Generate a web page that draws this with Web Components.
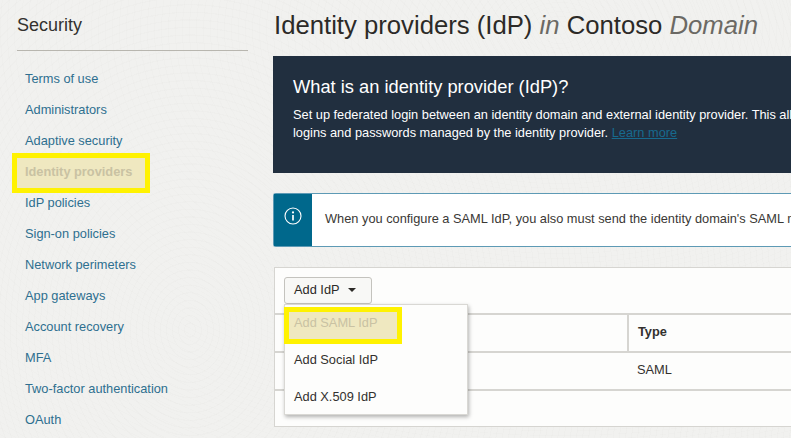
<!DOCTYPE html>
<html lang="en">
<head>
<meta charset="utf-8">
<title>Identity providers</title>
<style>
    html, body { margin: 0; height: 100%; overflow: hidden; }
    body {
        font-family: "Liberation Sans", Arial, sans-serif;
        background-color: #f1f1ef;
        background-image:
            repeating-radial-gradient(ellipse 190px 240px at 190px 330px, rgba(120,115,105,0) 0 5px, rgba(120,115,105,.018) 5px 6px),
            repeating-radial-gradient(ellipse 300px 200px at 560px 30px, rgba(120,115,105,0) 0 6px, rgba(120,115,105,.015) 6px 7px);
    }
</style>
</head>
<body>
<idp-page>
    <sec-sidebar slot="side" heading="Security">
        <nav-item>Terms of use</nav-item>
        <nav-item>Administrators</nav-item>
        <nav-item>Adaptive security</nav-item>
        <nav-item marked>Identity providers</nav-item>
        <nav-item>IdP policies</nav-item>
        <nav-item>Sign-on policies</nav-item>
        <nav-item>Network perimeters</nav-item>
        <nav-item>App gateways</nav-item>
        <nav-item>Account recovery</nav-item>
        <nav-item>MFA</nav-item>
        <nav-item>Two-factor authentication</nav-item>
        <nav-item>OAuth</nav-item>
    </sec-sidebar>
    <page-title>Identity providers (IdP) <em>in</em> Contoso <em>Domain</em></page-title>
    <hero-panel heading="What is an identity provider (IdP)?">
        Set up federated login between an identity domain and external identity provider. This allows<br>
        logins and passwords managed by the identity provider. <a href="#">Learn more</a>
    </hero-panel>
    <info-banner>When you configure a SAML IdP, you also must send the identity domain's SAML metadata</info-banner>
    <idp-card></idp-card>
</idp-page>

<script>
class IdpPage extends HTMLElement {
    constructor() {
        super();
        this.attachShadow({ mode: 'open' });
    }

    connectedCallback() {
        this.shadowRoot.innerHTML = `
            <style>
                :host { display: grid; grid-template-columns: 231px 560px; column-gap: 25px; padding-left: 17px; width: 900px; height: 438px; overflow: hidden; }
                .main { display: flex; flex-direction: column; width: 560px; }
            </style>
            <slot name="side"></slot>
            <div class="main"><slot></slot></div>
        `;
    }
}

class SecSidebar extends HTMLElement {
    constructor() {
        super();
        this.attachShadow({ mode: 'open' });
    }

    connectedCallback() {
        this.shadowRoot.innerHTML = `
            <style>
                :host { display: block; }
                h2 { margin: 0; padding-top: 15px; height: 35px; border-bottom: 1px solid #b8b6af; font-size: 18px; line-height: 21px; font-weight: 400; color: #33312e; }
                nav { display: flex; flex-direction: column; padding-top: 12px; }
            </style>
            <h2>${this.getAttribute('heading')}</h2>
            <nav><slot></slot></nav>
        `;
    }
}

class NavItem extends HTMLElement {
    constructor() {
        super();
        this.attachShadow({ mode: 'open' });
    }

    connectedCallback() {
        this.shadowRoot.innerHTML = `
            <style>
                :host { display: block; height: 31px; font-size: 12.8px; line-height: 31px; color: #2e6f8f; }
                span { display: block; padding-left: 8px; }
                :host([marked]) { color: #c9c2a3; font-weight: 700; }
                :host([marked]) span { width: 120px; height: 30px; line-height: 28px; margin-top: 2px; background: #efe8c0; outline: 5px solid #fff200; }
            </style>
            <span><slot></slot></span>
        `;
    }
}

class PageTitle extends HTMLElement {
    constructor() {
        super();
        this.attachShadow({ mode: 'open' });
    }

    connectedCallback() {
        this.shadowRoot.innerHTML = `
            <style>
                :host { display: block; height: 56px; box-sizing: border-box; padding: 11px 0 0 1px; font-size: 25.7px; line-height: 28px; color: #2c2a27; white-space: nowrap; }
                ::slotted(em) { color: #6b6964; font-style: italic; }
            </style>
            <slot></slot>
        `;
    }
}

class HeroPanel extends HTMLElement {
    constructor() {
        super();
        this.attachShadow({ mode: 'open' });
    }

    connectedCallback() {
        this.shadowRoot.innerHTML = `
            <style>
                :host { display: block; height: 117px; box-sizing: border-box; padding: 20px 0 0 20px; background: #212f3f; color: #fff; font-size: 12.8px; line-height: 18px; white-space: nowrap; }
                h3 { margin: 0 0 8px; font-size: 18.3px; line-height: 22px; font-weight: 400; }
                ::slotted(a) { color: #176a8e; }
            </style>
            <h3>${this.getAttribute('heading')}</h3>
            <slot></slot>
        `;
    }
}

class InfoBanner extends HTMLElement {
    constructor() {
        super();
        this.attachShadow({ mode: 'open' });
    }

    connectedCallback() {
        this.shadowRoot.innerHTML = `
            <style>
                :host { display: flex; height: 54px; margin-top: 20px; box-sizing: border-box; background: #fff; border: 1px solid #5d9ab5; border-right: 0; border-radius: 3px 0 0 3px; font-size: 12.8px; color: #3a3835; white-space: nowrap; }
                .tag { flex: none; width: 38px; background: #00688c; display: flex; justify-content: center; padding-top: 13px; box-sizing: border-box; }
                p { margin: 0; padding: 16px 0 0 13px; line-height: 18px; }
                svg { display: block; }
            </style>
            <div class="tag">
                <svg width="18" height="18" viewBox="0 0 18 18" fill="none" stroke="#fff">
                    <circle cx="9" cy="9" r="8" stroke-width="1.1"/>
                    <path d="M9 8v5.5" stroke-width="1.7"/>
                    <circle cx="9" cy="5.4" r="1.1" fill="#fff" stroke="none"/>
                </svg>
            </div>
            <p><slot></slot></p>
        `;
    }
}

class IdpCard extends HTMLElement {
    constructor() {
        super();
        this.attachShadow({ mode: 'open' });
    }

    connectedCallback() {
        this.shadowRoot.innerHTML = `
            <style>
                :host { display: block; position: relative; height: 160px; margin: 20px 0 0 1px; box-sizing: border-box; background: #fdfdfc; border: 1px solid #d6d5d1; border-right: 0; font-size: 12.8px; color: #33312e; }
                .bar { height: 45px; box-sizing: border-box; padding: 9px 0 0 9px; }
                button { display: flex; align-items: center; width: 88px; height: 27px; padding: 0 0 2px 9px; box-sizing: border-box; border: 1px solid #c4c3be; border-radius: 3px; background: #f8f8f6; font: inherit; color: #2c2a27; }
                .caret { margin-left: 8px; border: 4.5px solid transparent; border-top: 4px solid #2c2a27; border-bottom: 0; }
                .row { display: grid; grid-template-columns: 352px 1fr; height: 38px; box-sizing: border-box; border-top: 2px solid #d6d5d1; line-height: 34px; }
                .row div { padding-left: 10px; }
                .row.head div + div { padding-left: 9px; border-left: 2px solid #d6d5d1; font-weight: 700; }
                .menu { position: absolute; left: 9px; top: 36px; width: 184px; height: 111px; box-sizing: border-box; padding-top: 2px; background: #fdfdfc; border: 1px solid #d9d8d4; box-shadow: 1px 2px 4px rgba(0,0,0,.3); color: #33312e; }
                .menu a { display: block; height: 37px; line-height: 31px; padding-left: 9px; }
                .menu a.marked { width: 108px; height: 27px; line-height: 22px; margin: 5px 0 5px 4px; padding-left: 5px; box-sizing: border-box; background: #efe8c0; outline: 5px solid #fff200; color: #c9c2a3; }
            </style>
            <div class="bar"><button>Add IdP <span class="caret"></span></button></div>
            <div class="row head"><div></div><div>Type</div></div>
            <div class="row"><div></div><div>SAML</div></div>
            <div class="row"></div>
            <div class="menu">
                <a class="marked">Add SAML IdP</a>
                <a>Add Social IdP</a>
                <a>Add X.509 IdP</a>
            </div>
        `;
    }
}

customElements.define('idp-page', IdpPage);
customElements.define('sec-sidebar', SecSidebar);
customElements.define('nav-item', NavItem);
customElements.define('page-title', PageTitle);
customElements.define('hero-panel', HeroPanel);
customElements.define('info-banner', InfoBanner);
customElements.define('idp-card', IdpCard);
</script>
</body>
</html>
